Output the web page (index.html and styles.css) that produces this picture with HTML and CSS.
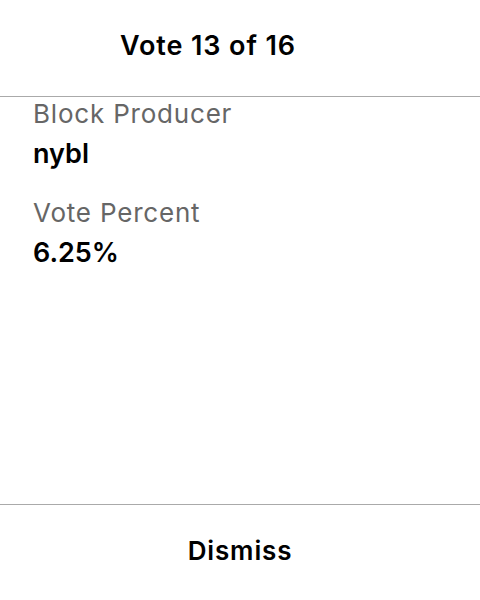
FILE: index.html
```html
<!DOCTYPE html>
<html>
<head>
<meta charset="utf-8">
<link rel="stylesheet" href="styles.css">
</head>
<body>
<div class="screen">
  <header class="header">
    <h1 class="title">Vote 13 of 16</h1>
  </header>
  <main class="content">
    <div class="field">
      <div class="label">Block Producer</div>
      <div class="value">nybl</div>
    </div>
    <div class="field">
      <div class="label">Vote Percent</div>
      <div class="value">6.25%</div>
    </div>
  </main>
  <footer class="footer">
    <button class="dismiss">Dismiss</button>
  </footer>
</div>
</body>
</html>
```
FILE: styles.css
```css
* { box-sizing: border-box; }
html, body { margin: 0; padding: 0; background: #fff; }
body { font-family: Inter, "Noto Sans", sans-serif; color: #000; }
.screen { width: 480px; height: 600px; display: flex; flex-direction: column; }
.header { height: 97px; border-bottom: 1px solid #aaaaaa; display: flex; align-items: flex-start; justify-content: center; padding-right: 64px; }
.title { margin: 0; margin-top: 29px; font-size: 27px; font-weight: 600; line-height: 33px; letter-spacing: 0.9px; }
.content { flex: 1; padding: 1px 33px 0; display: flex; flex-direction: column; gap: 27px; }
.field { display: flex; flex-direction: column; }
.label { font-size: 26px; color: #666; line-height: 32px; letter-spacing: 0.8px; }
.value { font-size: 27px; font-weight: 600; line-height: 33px; margin-top: 7px; letter-spacing: 0; }
.footer { height: 96px; border-top: 1px solid #aaaaaa; display: flex; justify-content: center; align-items: flex-start; }
.dismiss { border: 0; background: none; font-family: inherit; font-size: 26px; font-weight: 600; color: #000; margin-top: 30px; line-height: 32px; padding: 0; letter-spacing: 0.85px; }
```
